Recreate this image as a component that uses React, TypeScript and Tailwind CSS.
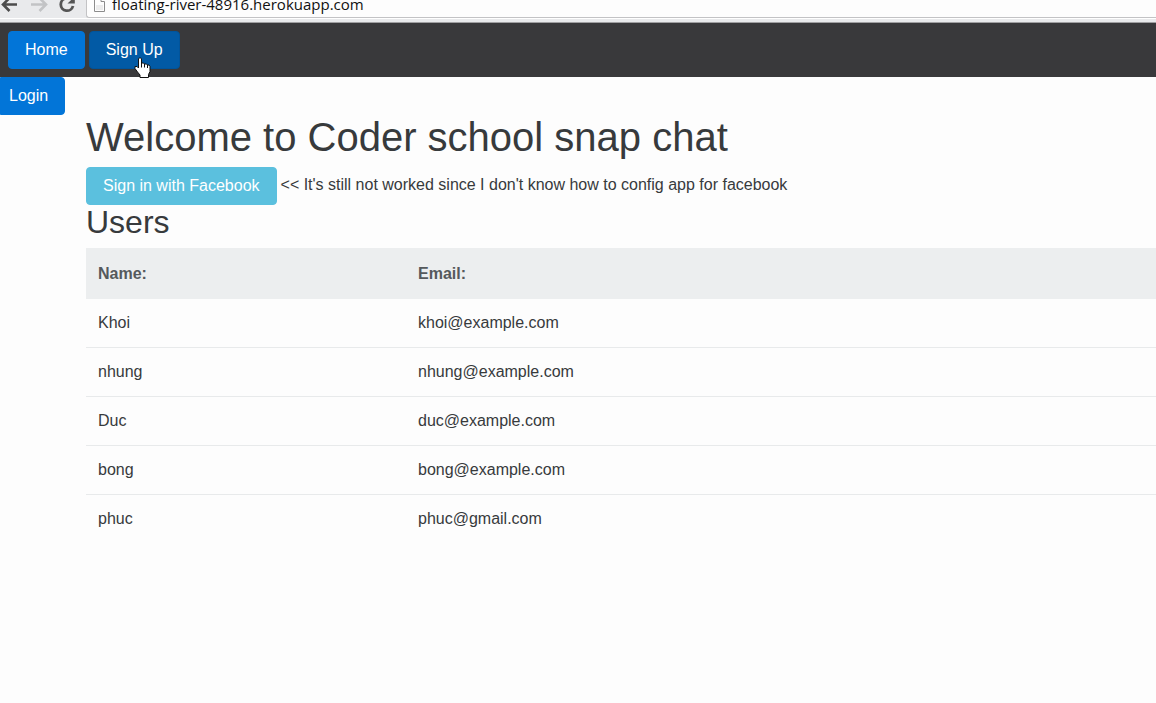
const users = [
  { name: "Khoi", email: "khoi@example.com" },
  { name: "nhung", email: "nhung@example.com" },
  { name: "Duc", email: "duc@example.com" },
  { name: "bong", email: "bong@example.com" },
  { name: "phuc", email: "phuc@gmail.com" },
];

function BrowserBar() {
  return (
    <div className="h-[23px] overflow-hidden border-b border-[#a0a0a2] bg-[#e9eaec]">
      <div className="flex h-[19px] border-b border-white">
        <div className="flex w-[86px] shrink-0">
          <button aria-label="Back" className="h-4 w-[26px]">
            <svg width="26" height="16" viewBox="0 0 26 16" fill="none" stroke="#4c4c4c" strokeWidth="2.6">
              <path d="M3 4.5H17M9.5 -2L3 4.5L9.5 11" />
            </svg>
          </button>
          <button aria-label="Forward" className="h-4 w-[30px]">
            <svg width="30" height="16" viewBox="0 0 30 16" fill="none" stroke="#c2c3c5" strokeWidth="2.6">
              <path d="M5 4.5H20M13.5 -2L20 4.5L13.5 11" />
            </svg>
          </button>
          <button aria-label="Reload" className="h-4 w-[30px]">
            <svg width="30" height="16" viewBox="0 0 30 16" fill="none">
              <path d="M10.5 -1.7A6.2 6.2 0 1 0 17 6" stroke="#555" strokeWidth="2.8" />
              <path d="M18.8 -3.5V3.5H11.5Z" fill="#555" />
            </svg>
          </button>
        </div>
        <div className="flex h-[18px] min-w-0 flex-1 rounded-bl-[3px] border-b border-l border-[#c3c3c5] bg-[#fdfdfd] pl-[7px]">
          <svg className="shrink-0" width="12" height="13" viewBox="0 0 12 13" fill="none">
            <path d="M0.5 -3V11.5H10.5V1.5H7V-3" fill="#fdfdfd" stroke="#8c8c8c" />
            <rect x="2" y="5" width="7" height="5" fill="#ececec" />
          </svg>
          <input
            aria-label="Address"
            readOnly
            value="floating-river-48916.herokuapp.com"
            className="-mt-[6px] ml-[6px] h-5 min-w-0 flex-1 bg-transparent font-['Open_Sans',sans-serif] text-[15px] leading-5 text-[#111] outline-none"
          />
        </div>
      </div>
    </div>
  );
}

function HandCursor() {
  return (
    <svg className="pointer-events-none absolute top-[25px] left-11" width="17" height="22" viewBox="0 0 17 22" aria-hidden="true">
      <path
        d="M4.5 2Q4.5 1 5.5 1H6.5Q7.5 1 7.5 2V6H9.5L10.5 7H12.5L13.5 8H15L16 9.5V14.5L14.5 17.5V20.5H6V18L3.5 15L1 11.5V9.5H3L4.5 11Z"
        fill="#fff"
        stroke="#111"
        strokeLinejoin="round"
      />
      <path d="M7.5 6V10.5M10.5 7V10.5M13.5 8V11" stroke="#111" />
    </svg>
  );
}

export default function App() {
  return (
    <div className="min-h-screen overflow-x-hidden bg-[#fdfdfd] font-['Liberation_Sans',sans-serif] text-base leading-6 text-[#373a3c]">
      <BrowserBar />
      <nav className="flex gap-1 bg-[#39393b] p-2">
        <a href="#home" className="rounded border border-[#0275d8] bg-[#0275d8] px-4 py-[6px] text-white">
          Home
        </a>
        <a href="#signup" className="relative rounded border border-[#01549b] bg-[#025aa5] px-4 py-[6px] text-white">
          Sign Up
          <HandCursor />
        </a>
      </nav>
      <div className="flex">
        <a href="#login" className="rounded-r border border-[#0275d8] bg-[#0275d8] py-[6px] pr-4 pl-2 text-white">
          Login
        </a>
      </div>
      <main className="pl-[86px]">
        <h1 className="mb-2 text-[40px] leading-[44px]">Welcome to Coder school snap chat</h1>
        <div className="flex items-start gap-1">
          <button className="rounded border border-[#5bc0de] bg-[#5bc0de] px-4 py-[6px] whitespace-nowrap text-white">
            Sign in with Facebook
          </button>
          <p className="pt-[6px]">&lt;&lt; It's still not worked since I don't know how to config app for facebook</p>
        </div>
        <h2 className="mb-2 text-[32px] leading-[35px]">Users</h2>
        <table className="w-full table-fixed border-collapse text-left">
          <thead className="bg-[#eceeef] text-[#55595c]">
            <tr className="h-[51px]">
              <th className="w-80 px-3 font-bold">Name:</th>
              <th className="px-3 font-bold">Email:</th>
            </tr>
          </thead>
          <tbody className="divide-y divide-[#e8eaeb]">
            {users.map((user) => (
              <tr key={user.email}>
                <td className="p-3">{user.name}</td>
                <td className="p-3">{user.email}</td>
              </tr>
            ))}
          </tbody>
        </table>
      </main>
    </div>
  );
}
